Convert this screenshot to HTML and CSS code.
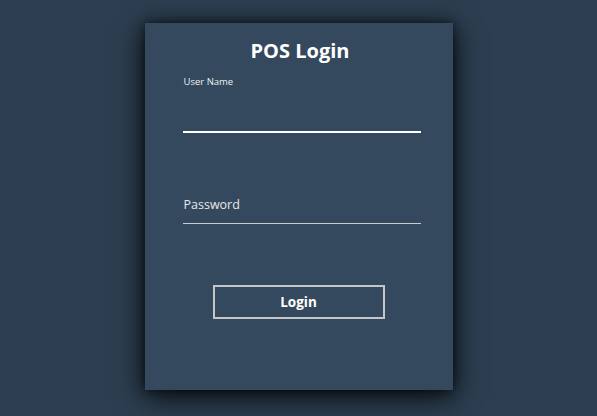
FILE: index.html
```html
<!DOCTYPE html>
<html>
<head>
<meta charset="utf-8">
<link rel="stylesheet" href="styles.css">
</head>
<body>
<div class="card">
  <h1 class="title">POS Login</h1>
  <div class="field">
    <label class="label-small">User Name</label>
    <div class="line line-active"></div>
  </div>
  <div class="field field-pw">
    <label class="label-pw">Password</label>
    <div class="line"></div>
  </div>
  <button class="btn">Login</button>
</div>
</body>
</html>
```
FILE: styles.css
```css
html, body {
  margin: 0;
  padding: 0;
  height: 100%;
}
body {
  background: #2c3e50;
  font-family: "Open Sans", "Noto Sans", sans-serif;
  display: flex;
  justify-content: center;
  align-items: flex-start;
}
.card {
  margin-top: 23px;
  width: 308px;
  height: 367px;
  background: #34495e;
  box-shadow: 0 6px 26px rgba(0, 0, 0, 0.9), 0 0 10px rgba(0, 0, 0, 0.55);
  display: flex;
  flex-direction: column;
  box-sizing: border-box;
  padding-top: 14px;
}
.title {
  margin: 0;
  text-align: center;
  color: #ffffff;
  font-size: 20px;
  font-weight: 700;
  line-height: 28px;
  padding-left: 3px;
}
.field {
  margin-left: 38px;
  width: 238px;
  display: flex;
  flex-direction: column;
}
.label-small {
  color: #ecf0f1;
  font-size: 9.5px;
  line-height: 12px;
  margin-top: 11px;
  padding-left: 1px;
}
.line {
  height: 1px;
  background: #c7ccd1;
}
.line-active {
  height: 2px;
  background: #ffffff;
  margin-top: 43px;
}
.field-pw {
  margin-top: 63px;
}
.label-pw {
  color: #e6e9eb;
  font-size: 12.5px;
  line-height: 18px;
  padding-left: 1px;
  margin-bottom: 9px;
}
.btn {
  margin: 61px 0 0 68px;
  width: 172px;
  height: 34px;
  background: transparent;
  border: 2px solid #c3c6c9;
  color: #ffffff;
  font-family: "Open Sans", "Noto Sans", sans-serif;
  font-weight: 700;
  font-size: 13.5px;
  padding: 0;
}
```
